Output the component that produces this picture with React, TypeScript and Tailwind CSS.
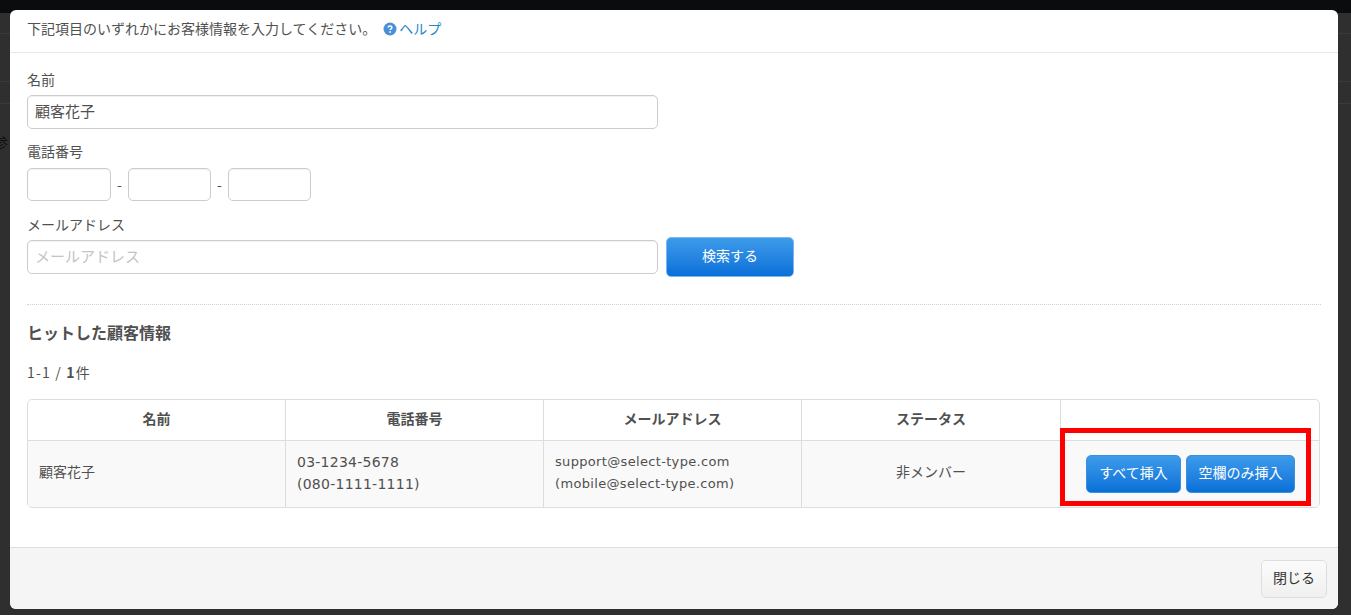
import { useState } from 'react';

const font = { ja: "font-['Noto_Sans_CJK_JP','Noto_Sans',sans-serif]" };

const blueButton =
    'rounded-[5px] bg-gradient-to-b from-[#3d9bea] to-[#0670d8] pb-[4px] text-white text-[14px] leading-none';

function HelpIcon() {
    return (
        <svg width="14" height="14" viewBox="0 0 14 14" className="shrink-0">
            <circle cx="7" cy="7" r="6.5" fill="#4a90d9" />
            <path
                d="M5.2 5.6c0-1.1.8-1.7 1.9-1.7s1.8.6 1.8 1.5c0 1.4-1.8 1.4-1.8 2.7"
                fill="none"
                stroke="#fff"
                strokeWidth="1.5"
            />
            <circle cx="7.1" cy="10" r="0.9" fill="#fff" />
        </svg>
    );
}

function TextBox({
    className,
    value,
    placeholder,
    onChange,
}: {
    className: string;
    value?: string;
    placeholder?: string;
    onChange?: (v: string) => void;
}) {
    return (
        <input
            value={value ?? ''}
            placeholder={placeholder}
            onChange={(e) => onChange?.(e.target.value)}
            className={`${className} rounded-[5px] border border-[#cccccc] bg-white pr-[7px] pb-[4px] pl-[7px] text-[15px] text-[#505050] placeholder:text-[#c4c4c4] shadow-[inset_0_1px_1px_rgba(0,0,0,0.06)] outline-none`}
        />
    );
}

export default function App() {
    const [name, setName] = useState('顧客花子');

    return (
        <div
            className={`${font.ja} relative h-[615px] w-[1351px] overflow-hidden bg-[#2f2f2f] text-[#505050]`}
        >
            {/* page dimmed behind the modal */}
            <div className="h-[13px] bg-[#0b0c0e]" />
            <div className="mt-[20px] h-[48px] border-t border-[#3a3a3a]" />
            <div className="h-[22px] border-t border-[#3a3a3a]" />
            <div className="border-t border-[#3a3a3a]" />
            <div className="absolute top-[131px] left-[-7px] text-[15px] text-[#111111]">参</div>

            <div className="absolute top-[10px] left-[10px] flex h-[599px] w-[1328px] flex-col overflow-hidden rounded-[6px] bg-white">
                <div className="flex h-[43px] shrink-0 items-center border-b border-[#e8e8e8] pb-[5px] pl-[17px] text-[14px]">
                    <span>下記項目のいずれかにお客様情報を入力してください。</span>
                    <span className="ml-[7px] flex items-center gap-[2px] text-[#1e88c7]">
                        <HelpIcon />
                        ヘルプ
                    </span>
                </div>

                <div className="flex-1 px-[17px]">
                    <div className="mt-[16px] h-[21px] text-[14px] leading-[21px]">名前</div>
                    <TextBox
                        className="mt-[5px] block h-[34px] w-[631px]"
                        value={name}
                        onChange={setName}
                    />

                    <div className="mt-[12px] h-[21px] text-[14px] leading-[21px]">電話番号</div>
                    <div className="mt-[6px] flex items-center">
                        <TextBox className="h-[33px] w-[84px]" />
                        <span className="w-[17px] text-center text-[14px]">-</span>
                        <TextBox className="h-[33px] w-[83px]" />
                        <span className="w-[17px] text-center text-[14px]">-</span>
                        <TextBox className="h-[33px] w-[83px]" />
                    </div>

                    <div className="mt-[13px] h-[21px] text-[14px] leading-[21px]">メールアドレス</div>
                    <div className="mt-[2px] flex items-center">
                        <TextBox className="h-[34px] w-[631px]" placeholder="メールアドレス" />
                        <button
                            type="button"
                            className={`${blueButton} ml-[8px] h-[40px] w-[128px] border border-[#7fb5ee]`}
                        >
                            検索する
                        </button>
                    </div>

                    <div className="mt-[27px] border-t border-dotted border-[#d0d0d0]" />

                    <h3 className="mt-[17px] text-[16px] leading-[21px] font-bold">ヒットした顧客情報</h3>
                    <p className="mt-[19px] text-[14px] leading-[21px] tracking-[1.2px]">
                        1-1 / <b>1</b>件
                    </p>

                    <div className="relative mt-[16px] w-[1293px]">
                        <table className="w-full table-fixed border-separate border-spacing-0 overflow-hidden rounded-[5px] border border-[#dddddd] text-[14px]">
                            <thead>
                                <tr className="h-[41px] font-bold">
                                    <th className="w-[258px] border-r border-b border-[#dddddd] pb-[3px]">名前</th>
                                    <th className="w-[258px] border-r border-b border-[#dddddd] pb-[3px]">電話番号</th>
                                    <th className="w-[258px] border-r border-b border-[#dddddd] pb-[3px]">メールアドレス</th>
                                    <th className="w-[259px] border-r border-b border-[#dddddd] pb-[3px]">ステータス</th>
                                    <th className="border-b border-[#dddddd]" />
                                </tr>
                            </thead>
                            <tbody>
                                <tr className="h-[66px] bg-[#f9f9f9]">
                                    <td className="border-r border-[#dddddd] pb-[5px] pl-[11px]">顧客花子</td>
                                    <td className="border-r border-[#dddddd] pb-[2px] pl-[11px] font-['DejaVu_Sans',sans-serif] leading-[22px] tracking-[0.25px]">
                                        03-1234-5678
                                        <br />
                                        (080-1111-1111)
                                    </td>
                                    <td className="border-r border-[#dddddd] pb-[2px] pl-[11px] font-['DejaVu_Sans',sans-serif] text-[13px] leading-[22px] tracking-[0.33px]">
                                        support@select-type.com
                                        <br />
                                        (mobile@select-type.com)
                                    </td>
                                    <td className="border-r border-[#dddddd] pb-[5px] text-center">非メンバー</td>
                                    <td>
                                        <div className="flex justify-end gap-[5px] pr-[24px]">
                                            <button type="button" className={`${blueButton} h-[38px] w-[95px] border border-[#3c8fdc]`}>
                                                すべて挿入
                                            </button>
                                            <button type="button" className={`${blueButton} h-[38px] w-[109px] border border-[#3c8fdc]`}>
                                                空欄のみ挿入
                                            </button>
                                        </div>
                                    </td>
                                </tr>
                            </tbody>
                        </table>
                        {/* red highlight from the manual */}
                        <div className="absolute top-[29px] left-[1033px] h-[78px] w-[251px] border-[5px] border-[#ff0000]" />
                    </div>
                </div>

                <div className="flex h-[62px] shrink-0 items-center justify-end border-t border-[#dddddd] bg-[#f5f5f5] pr-[11px]">
                    <button
                        type="button"
                        className="h-[38px] w-[66px] rounded-[5px] border border-[#dddddd] bg-gradient-to-b from-[#fbfbfb] to-[#f0f0f0] pb-[3px] text-[14px] text-[#333333]"
                    >
                        閉じる
                    </button>
                </div>
            </div>
        </div>
    );
}
